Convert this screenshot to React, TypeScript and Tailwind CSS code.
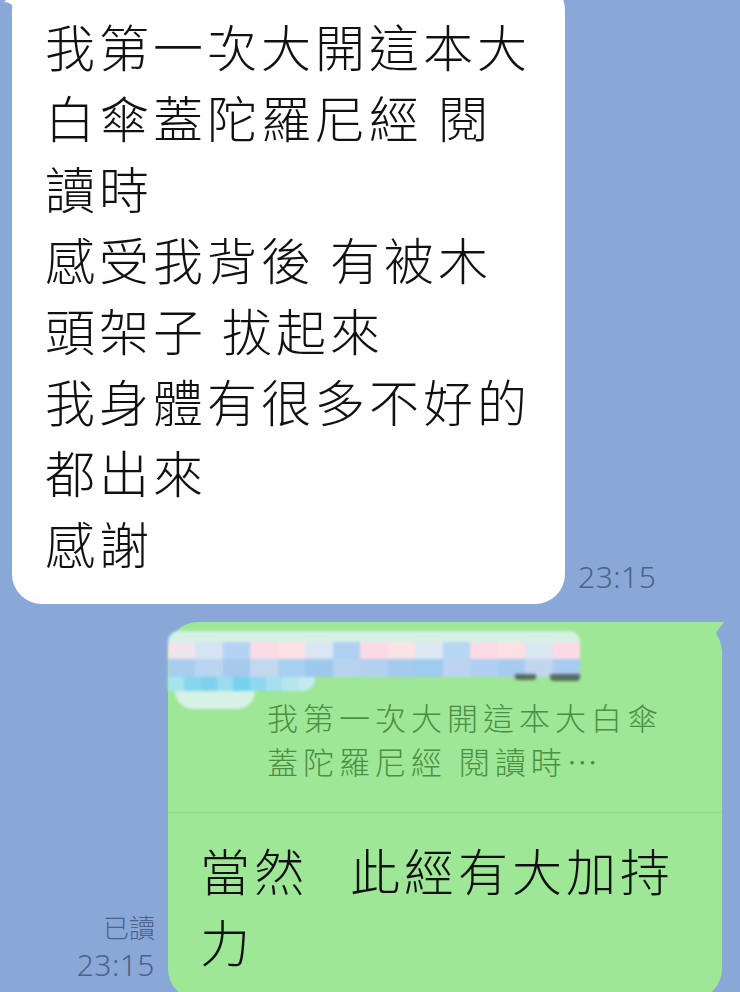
const rowB = [
  "bg-[#f1e3ec]", "bg-[#d5e3f3]", "bg-[#b4d3f2]", "bg-[#fadbe6]", "bg-[#fde0e4]",
  "bg-[#dbe6f3]", "bg-[#b0d0f2]", "bg-[#fbd9e6]", "bg-[#fde2e4]", "bg-[#dde8f3]",
  "bg-[#b6d6f2]", "bg-[#fbdbe6]", "bg-[#fde0e5]", "bg-[#dbe7f3]", "bg-[#fcdae5]",
];
const rowC = [
  "bg-[#a9cdef]", "bg-[#b9d5ef]", "bg-[#a7c9ee]", "bg-[#c2d8ef]", "bg-[#a6d0ef]",
  "bg-[#9ec8ee]", "bg-[#b8d3f0]", "bg-[#b3d0ef]", "bg-[#a4caee]", "bg-[#9ecbee]",
  "bg-[#bcd4ef]", "bg-[#b0cff0]", "bg-[#a7cbee]", "bg-[#c0d6ef]", "bg-[#a8ccf0]",
];
const rowD = [
  "bg-[#a6e4f0]", "bg-[#86d6ef]", "bg-[#7fd0ee]", "bg-[#9adcf0]", "bg-[#74d2ee]",
  "bg-[#8fd8ef]", "bg-[#a4e0f1]", "bg-[#b5e6f0]", "bg-[#c2ebee]",
];

function Mosaic() {
  return (
    <div className="absolute left-0 top-[9px] w-[412px] blur-[1.5px]">
      <div className="h-[11px] rounded-t-[14px] bg-[#d6f1e4]" />
      <div className="flex h-[17px]">
        {rowB.map((c, i) => (
          <div key={i} className={`flex-1 ${c}`} />
        ))}
      </div>
      <div className="flex h-[18px]">
        {rowC.map((c, i) => (
          <div key={i} className={`flex-1 ${c}`} />
        ))}
      </div>
      <div className="flex items-start">
        <div className="flex h-[14px] w-[235px] rounded-br-[12px] overflow-hidden">
          {rowD.map((c, i) => (
            <div key={i} className={`flex-1 ${c}`} />
          ))}
        </div>
        {/* leftover strokes of the hidden name */}
        <div className="ml-[200px] mt-[-3px] h-[6px] w-[34px] bg-[#222]/60 rounded-b-[3px]" />
        <div className="ml-[14px] mt-[-3px] h-[7px] w-[48px] bg-[#222]/60 rounded-b-[4px]" />
      </div>
      <div className="ml-[7px] h-[18px] w-[80px] rounded-b-full bg-[#d7f1e6]" />
    </div>
  );
}

const received = [
  "我第一次大開這本大",
  "白傘蓋陀羅尼經 閱",
  "讀時",
  "感受我背後 有被木",
  "頭架子 拔起來",
  "我身體有很多不好的",
  "都出來",
  "感謝",
];

export default function App() {
  return (
    <div className="w-[740px] h-[992px] overflow-hidden bg-[#8aa8d7] font-['Noto_Sans_CJK_TC','Noto_Sans',sans-serif] font-light">
      {/* received message, cut off at the top */}
      <div className="flex items-end mt-[-20px] pl-[12px]">
        <div className="relative w-[553px] rounded-[30px] bg-white pl-[33px] pt-[30px] pb-[26px] text-[50px] leading-[71px] tracking-[4px] text-[#111]">
          <svg className="absolute -left-[8px] top-[4px]" width="16" height="34" viewBox="0 0 16 34">
            <path d="M16 0 L16 34 Q10 18 0 18 Q8 12 8 0 Z" fill="#ffffff" />
          </svg>
          {received.map((l, i) => (
            <div key={i} className="whitespace-pre">{l}</div>
          ))}
        </div>
        <div className="ml-[13px] mb-[12px] font-['Noto_Sans',sans-serif] font-light text-[30px] tracking-[0.5px] leading-none text-[#4c6287]">
          23:15
        </div>
      </div>

      {/* sent reply, cut off at the bottom */}
      <div className="flex justify-end items-end gap-[13px] mt-[18px] pr-[18px]">
        <div className="mb-[14px] flex flex-col items-end text-[#4c6287]">
          <div className="text-[26px] leading-[36px]">已讀</div>
          <div className="font-['Noto_Sans',sans-serif] font-light text-[30px] tracking-[0.5px] leading-[40px]">23:15</div>
        </div>
        <div className="relative w-[554px] rounded-[30px] bg-[#9ee796]">
          <svg className="absolute -right-[2px] -top-[3px]" width="36" height="36" viewBox="0 0 36 36">
            <path d="M0 3 H36 L28 14 Q32 20 32 36 H0 Z" fill="#9ee796" />
          </svg>
          <Mosaic />
          <div className="pl-[99px] pt-[73px] pb-[29px] text-[31px] leading-[44px] tracking-[5px] text-[#4b8f45]">
            <div>我第一次大開這本大白傘</div>
            <div>蓋陀羅尼經 閱讀時…</div>
          </div>
          <div className="border-t border-[#8fd98a]" />
          <div className="pl-[32px] pt-[21px] pb-[23px] text-[50px] leading-[71px] tracking-[4px] text-[#111]">
            <div className="whitespace-pre">
              當然<span className="inline-block w-[42px]" />此經有大加持
            </div>
            <div>力</div>
          </div>
        </div>
      </div>
    </div>
  );
}
